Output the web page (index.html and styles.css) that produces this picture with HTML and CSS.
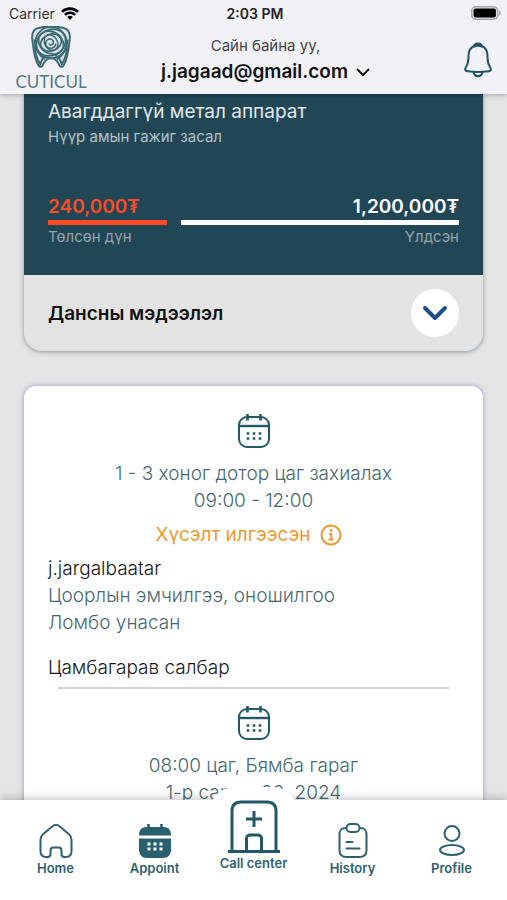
FILE: index.html
```html
<!DOCTYPE html>
<html lang="mn">
<head>
<meta charset="utf-8">
<meta name="viewport" content="width=device-width, initial-scale=1">
<title>Cuticul</title>
<link rel="stylesheet" href="styles.css">
</head>
<body>
<svg class="defs" aria-hidden="true">
  <symbol id="calendar" viewBox="0 0 34 36" fill="none" stroke="currentColor" stroke-width="2">
    <rect x="2" y="4" width="30" height="30" rx="8"/>
    <path d="M2 13h30" stroke-width="2.400"/>
    <path d="M10.500 1v6.500M23.500 1v6.500" stroke-width="2.600"/>
    <path d="M9.700 20.500h2.600M15.700 20.500h2.600M21.700 20.500h2.600M9.700 25.500h2.600M15.700 25.500h2.600M21.700 25.500h2.600" stroke-width="2.600"/>
  </symbol>
</svg>

<header class="header">
  <div class="status">
    <span class="status-carrier">Carrier
      <svg class="wifi" viewBox="0 0 18 13" fill="none" stroke="#000" stroke-width="2.600">
        <path d="M1 4.900a11.500 11.500 0 0 1 16 0M3.900 7.900a7.300 7.300 0 0 1 10.200 0"/>
        <path d="M9 13l-2.800-3a4 4 0 0 1 5.600 0z" fill="#000" stroke="none"/>
      </svg>
    </span>
    <span class="status-time">2:03 PM</span>
    <span class="status-battery">
      <svg class="battery" viewBox="0 0 30 14">
        <rect x=".7" y=".7" width="26" height="12.600" rx="4" fill="#e4e4e8" stroke="#a5a5a9" stroke-width="1.400"/>
        <rect x="2.500" y="2.500" width="22.400" height="9" rx="2" fill="#000"/>
        <path d="M28 4.500c2.300 1 2.300 4 0 5z" fill="#a5a5a9"/>
      </svg>
    </span>
  </div>
  <div class="topbar">
    <a class="brand" href="#" aria-label="Cuticul">
      <svg class="brand-mark" viewBox="0 0 42 44" fill="none" stroke="#3c6a75">
        <path d="M8 2C3 3 1 8 2 15c1 9 2 19 6 25 2 3 4 2 5-1 2-4 4-6 8-6s6 2 8 6c1 3 3 4 5 1 4-6 5-16 6-25 1-7-1-12-6-13C26 0 16 0 8 2z" fill="#dfe6ea" stroke-width="2"/>
        <path d="M4 20c1 8 3 15 6 19 2-4 1-7 7-9M38 20c-1 8-3 15-6 19-2-4-1-7-7-9M4 14c1 10 4 16 11 20M38 14c-1 10-4 16-11 20" stroke-width="2"/>
        <circle cx="21" cy="17" r="16" stroke-width="1.800"/>
        <ellipse cx="21" cy="17" rx="15.500" ry="13" transform="rotate(-30 21 17)" stroke-width="1.800"/>
        <ellipse cx="21" cy="17" rx="13.500" ry="11" transform="rotate(35 21 17)" stroke-width="1.800"/>
        <ellipse cx="21" cy="17" rx="11" ry="8.500" transform="rotate(-20 21 17)" stroke-width="1.800"/>
        <ellipse cx="21" cy="17" rx="8.500" ry="6.500" transform="rotate(60 21 17)" stroke-width="1.500"/>
        <path d="M26 18c-1 6-8 6-10 2-2-6 5-9 7-5 2 4-3 6-4 3" stroke-width="1.600"/>
      </svg>
      <span class="brand-name">CUTICUL</span>
    </a>
    <div class="account">
      <span class="greeting">Сайн байна уу,</span>
      <button class="account-button" type="button">j.jagaad@gmail.com
        <svg class="chevron-small" viewBox="0 0 14 9" fill="none" stroke="currentColor" stroke-width="2"><path d="M1 1l6 6 6-6"/></svg>
      </button>
    </div>
    <button class="bell" type="button" aria-label="Notifications">
      <svg viewBox="0 0 28 36" fill="none" stroke="#205363" stroke-width="2" stroke-linejoin="round">
        <path d="M10.500 4C6 5.500 4.500 9 4.500 14c0 6-.5 8-2.500 11-1.700 2.700-.5 4 1.500 4.300 7 1 14 1 21 0 2-.3 3.200-1.600 1.500-4.300-2-3-2.500-5-2.500-11 0-5-1.500-8.500-6-10"/>
        <path d="M10 4.500c.5-4 7.500-4 8 0-3-1-5-1-8 0z" fill="#205363"/>
        <path d="M9.500 30c1 5.500 8 5.500 9 0"/>
      </svg>
    </button>
  </div>
</header>

<main class="content">
  <section class="plan">
    <div class="plan-body">
      <h2 class="plan-title">Авагддаггүй метал аппарат</h2>
      <p class="plan-subtitle">Нүүр амын гажиг засал</p>
      <div class="amounts">
        <div class="amount amount-paid">
          <strong>240,000₮</strong>
          <span>Төлсөн дүн</span>
        </div>
        <div class="amount amount-left">
          <strong>1,200,000₮</strong>
          <span>Үлдсэн</span>
        </div>
      </div>
    </div>
    <div class="plan-footer">
      <h3 class="plan-account">Дансны мэдээлэл</h3>
      <button class="expand" type="button" aria-label="Дансны мэдээлэл">
        <svg viewBox="0 0 26 16" fill="none" stroke="#1e4f86" stroke-width="4" stroke-linecap="round" stroke-linejoin="round"><path d="M3 3l10 10L23 3"/></svg>
      </button>
    </div>
  </section>

  <section class="visits">
    <article class="visit">
      <svg class="visit-icon"><use href="#calendar"/></svg>
      <p class="visit-time">1 - 3 хоног дотор цаг захиалах<br>09:00 - 12:00</p>
      <p class="visit-status">Хүсэлт илгээсэн
        <svg class="info" viewBox="0 0 22 22" fill="none" stroke="currentColor" stroke-width="2">
          <circle cx="11" cy="11" r="9.500"/>
          <path d="M9 10h2.300v5M8.500 15.500h5"/><path d="M10 6.500h2.400" stroke-width="2.400"/>
        </svg>
      </p>
      <p class="visit-details"><span class="dark">j.jargalbaatar</span><br>Цоорлын эмчилгээ, оношилгоо<br>Ломбо унасан</p>
      <p class="visit-branch">Цамбагарав салбар</p>
    </article>
    <article class="visit">
      <svg class="visit-icon"><use href="#calendar"/></svg>
      <p class="visit-time">08:00 цаг, Бямба гараг<br>1-р сарын 20, 2024</p>
    </article>
  </section>
</main>

<nav class="tabs">
  <a class="tab" href="#">
    <svg viewBox="0 0 34 36" fill="none" stroke="currentColor" stroke-width="2" stroke-linejoin="round">
      <path d="M13.500 3.300c2-1.700 5-1.700 7 0l9.500 8c2 1.700 2.500 3 2.500 5.500v11.500c0 3.500-2 5.700-5.500 5.700h-1.500c-2 0-3-1-3-3v-3.500c0-2-1-3-3-3h-5c-2 0-3 1-3 3V31c0 2-1 3-3 3H7c-3.500 0-5.500-2.200-5.500-5.700V16.800c0-2.500.5-3.800 2.500-5.500z"/>
    </svg>
    <span>Home</span>
  </a>
  <a class="tab" href="#" aria-current="page">
    <svg viewBox="0 0 34 36" fill="none">
      <path d="M1 12.500C1 6 4 4 9 4h16c5 0 8 2 8 8.500z" fill="#27606f"/>
      <path d="M1 15.500h32V26c0 6-3 9-8 9H9c-5 0-8-3-8-9z" fill="#27606f"/>
      <path d="M10.500 1v6M23.500 1v6" stroke="#27606f" stroke-width="2.600"/>
      <path d="M9.500 21h3M15.500 21h3M21.500 21h3M9.500 26h3M15.500 26h3M21.500 26h3" stroke="#fff" stroke-width="3"/>
    </svg>
    <span>Appoint</span>
  </a>
  <a class="tab tab-call" href="#">
    <svg viewBox="0 0 52 54" fill="none" stroke="currentColor" stroke-width="3">
      <path d="M0 51.500h52M4 51V11c0-6 3-9 9-9h26c6 0 9 3 9 9v40M18.500 51V39c0-3 1-4 4-4h7c3 0 4 1 4 4v12M26 11v16M18 19h16"/>
    </svg>
    <span>Call center</span>
  </a>
  <a class="tab" href="#">
    <svg viewBox="0 0 34 36" fill="none" stroke="currentColor" stroke-width="2" stroke-linecap="round">
      <path d="M10 5C5 5 3.500 7 3.500 12v15c0 5 2 7 7 7h13c5 0 7-2 7-7V12c0-5-1.500-7-6.500-7"/>
      <rect x="10.500" y="1" width="13" height="8" rx="4"/>
      <path d="M10.500 19h6M10.500 25.500h13"/>
    </svg>
    <span>History</span>
  </a>
  <a class="tab" href="#">
    <svg viewBox="0 0 34 36" fill="none" stroke="currentColor" stroke-width="2">
      <circle cx="17" cy="10.500" r="7.500"/><ellipse cx="17" cy="27" rx="12" ry="5"/>
    </svg>
    <span>Profile</span>
  </a>
</nav>
</body>
</html>
```

FILE: styles.css
```css
:root {
  --teal: #225867;
  --card: #214756;
  --muted: #466970;
  --page: #e5e5e5;
}

* { box-sizing: border-box; }

body {
  display: flex;
  flex-direction: column;
  height: 100vh;
  margin: 0;
  overflow: hidden;
  background: var(--page);
  color: #171719;
  font-family: Inter, "Noto Sans", sans-serif;
}

h2, h3, p { margin: 0; }

button {
  padding: 0;
  border: 0;
  background: none;
  color: inherit;
  font: inherit;
}

a { color: inherit; text-decoration: none; }
svg { display: block; }
.defs { position: absolute; width: 0; height: 0; }

/* Header */
.header {
  position: relative;
  z-index: 1;
  flex: none;
  background: #f1f1f6;
  box-shadow: 0 1px 5px rgba(0, 0, 0, .3);
}

.status {
  display: grid;
  grid-template-columns: 1fr auto 1fr;
  align-items: center;
  height: 26px;
  padding: 0 6px 0 9px;
  font-size: 14px;
}

.status-carrier { display: flex; align-items: center; gap: 6px; color: #333; }
.status-time { font-weight: 600; color: #222; }
.status-battery { justify-self: end; }
.wifi { width: 18px; height: 13px; }
.battery { width: 30px; height: 14px; }

.topbar {
  display: grid;
  grid-template-columns: 72px 1fr 48px;
  height: 68px;
  padding: 0 15px;
}

.brand { display: flex; flex-direction: column; align-items: center; }
.brand-mark { width: 42px; height: 43px; }
.brand-name {
  color: #557984;
  font-family: Lato, sans-serif;
  font-size: 17px;
  line-height: 26px;
}

.account {
  display: flex;
  flex-direction: column;
  align-items: center;
  padding-top: 7px;
}

.greeting { color: #444; font-size: 15px; line-height: 26px; }

.account-button {
  display: flex;
  align-items: center;
  gap: 8px;
  color: #111;
  font-size: 19px;
  font-weight: 600;
  line-height: 26px;
}

.chevron-small { width: 14px; height: 9px; }
.bell { align-self: start; justify-self: end; margin-top: 16px; }
.bell svg { width: 28px; height: 36px; }

/* Scrolling content */
.content {
  flex: 1;
  min-height: 0;
  padding: 0 24px;
  overflow-y: auto;
  scrollbar-width: none;
}

.plan {
  margin-bottom: 35px;
  overflow: hidden;
  border-radius: 0 0 18px 18px;
  background: #e3e3e3;
  box-shadow: 0 1px 4px rgba(50, 70, 80, .5);
}

.plan-body { padding: 5px 24px 27px; background: var(--card); color: #fff; }
.plan-title { color: #e1e9ec; font-size: 19px; font-weight: 400; line-height: 26px; }
.plan-subtitle { color: #b4c2c8; font-size: 15px; line-height: 24px; }

.amounts {
  display: grid;
  grid-template-columns: 119px 1fr;
  gap: 14px;
  margin-top: 45px;
}

.amount { display: flex; flex-direction: column; }
.amount strong {
  border-bottom: 5px solid currentColor;
  font-size: 19px;
  font-weight: 600;
  line-height: 26px;
}
.amount span { color: #93a5ad; font-size: 15px; line-height: 23px; }
.amount-paid { color: #fc4a25; }
.amount-left { text-align: right; }

.plan-footer {
  display: flex;
  align-items: center;
  justify-content: space-between;
  height: 76px;
  padding: 0 24px;
}

.plan-account { color: #111; font-size: 19px; font-weight: 600; }

.expand {
  display: grid;
  place-items: center;
  width: 48px;
  height: 48px;
  border-radius: 50%;
  background: #fff;
}
.expand svg { width: 26px; height: 16px; }

.visits {
  padding: 27px 24px;
  border-radius: 12px;
  background: #fff;
  box-shadow: 0 0 4px 1px rgba(139, 128, 205, .6);
}

.visit {
  display: flex;
  flex-direction: column;
  color: var(--muted);
  font-size: 19px;
  font-weight: 300;
  line-height: 27px;
}

.visit + .visit {
  margin: 0 10px;
  padding-top: 16px;
  border-top: 2px solid #cfd3d5;
}

.visit-icon {
  align-self: center;
  width: 34px;
  height: 36px;
  margin-bottom: 11px;
  color: var(--teal);
}

.visit-time { text-align: center; }

.visit-status {
  display: flex;
  align-items: center;
  justify-content: center;
  gap: 10px;
  margin: 7px 0;
  padding-right: 9px;
  color: #f0982f;
  font-weight: 400;
}
.info { width: 22px; height: 22px; }
.dark, .visit-branch { color: #171719; }
.visit-branch { margin: 18px 0 6px; }

/* Bottom navigation */
.tabs {
  position: relative;
  display: grid;
  grid-template-columns: repeat(5, 1fr);
  flex: none;
  height: 100px;
  padding: 0 6px;
  background: #fff;
  box-shadow: 0 -2px 8px rgba(0, 0, 0, .22);
}

.tab {
  display: flex;
  flex-direction: column;
  align-items: center;
  padding-top: 23px;
  color: #2e6170;
  font-size: 13px;
  font-weight: 600;
  line-height: 18px;
}

.tab svg { width: 34px; height: 36px; }

.tab-call {
  align-self: start;
  justify-self: center;
  margin-top: -13px;
  padding: 13px 10px 0;
  border-radius: 24px 24px 0 0;
  background: #fff;
  white-space: nowrap;
}
.tab-call svg { width: 52px; height: 54px; color: var(--teal); }
```
